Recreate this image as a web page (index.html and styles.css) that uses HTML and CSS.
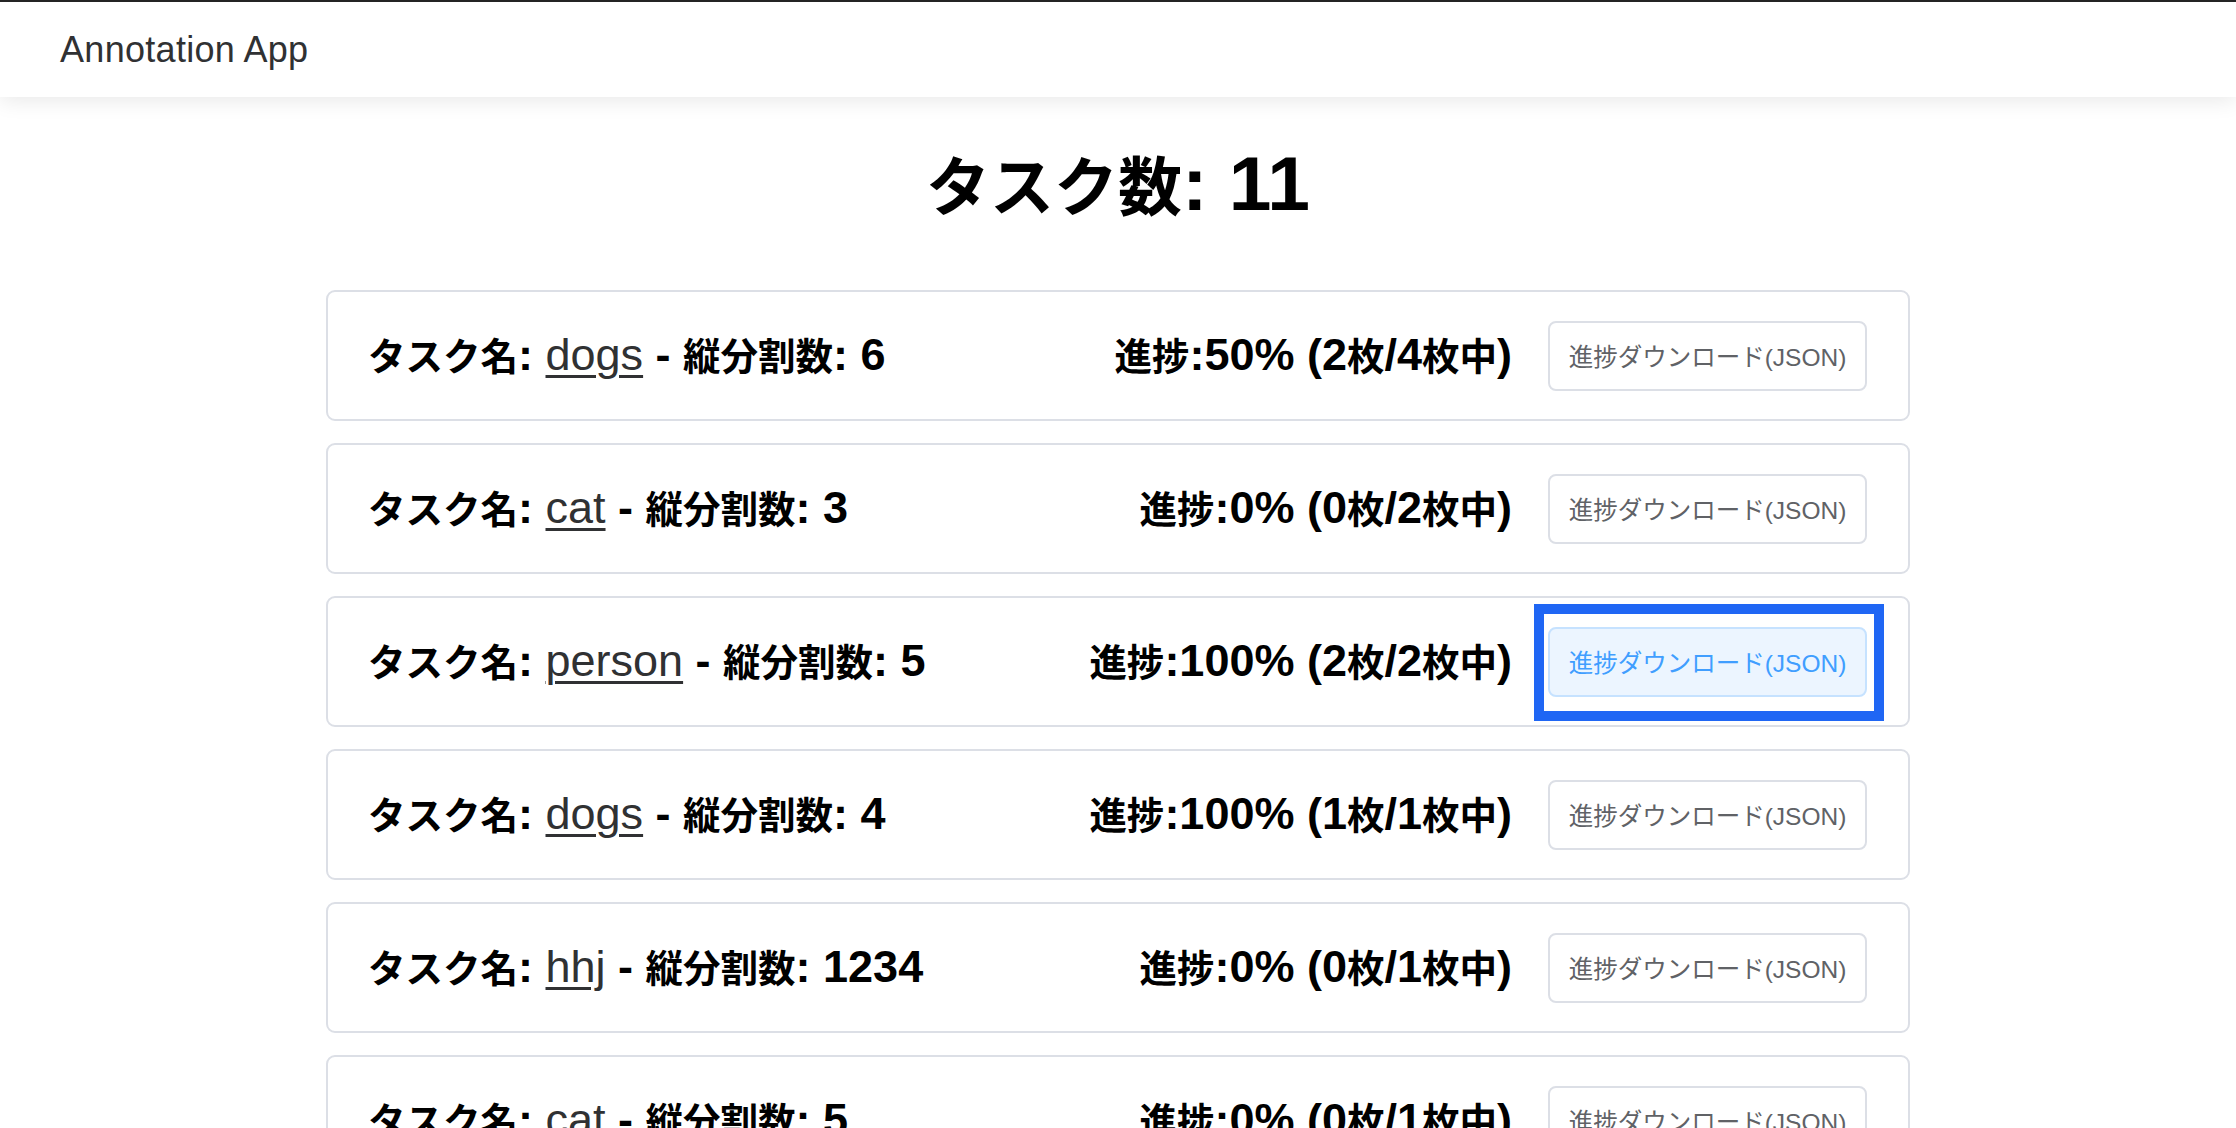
FILE: index.html
```html
<!DOCTYPE html>
<html lang="ja">
<head>
<meta charset="utf-8">
<title>Annotation App</title>
<link rel="stylesheet" href="styles.css">
</head>
<body>
<div class="chrome-line"></div>
<header class="app-header">
  <div class="brand">Annotation App</div>
</header>
<main class="main">
  <h1 class="page-title">タスク数<span class="lt">: 11</span></h1>
  <div class="task-list">
    <div class="task-card">
      <div class="task-name">タスク名<span class="lt">: </span><a class="task-link lt" href="#">dogs</a><span class="lt"> - </span>縦分割数<span class="lt">: 6</span></div>
      <div class="task-right">
        <div class="task-progress">進捗<span class="lt">:50% (2</span>枚<span class="lt">/4</span>枚中<span class="lt">)</span></div>
        <div class="btn-wrap"><button class="dl-btn">進捗ダウンロード(JSON)</button></div>
      </div>
    </div>
    <div class="task-card">
      <div class="task-name">タスク名<span class="lt">: </span><a class="task-link lt" href="#">cat</a><span class="lt"> - </span>縦分割数<span class="lt">: 3</span></div>
      <div class="task-right">
        <div class="task-progress">進捗<span class="lt">:0% (0</span>枚<span class="lt">/2</span>枚中<span class="lt">)</span></div>
        <div class="btn-wrap"><button class="dl-btn">進捗ダウンロード(JSON)</button></div>
      </div>
    </div>
    <div class="task-card">
      <div class="task-name">タスク名<span class="lt">: </span><a class="task-link lt" href="#">person</a><span class="lt"> - </span>縦分割数<span class="lt">: 5</span></div>
      <div class="task-right">
        <div class="task-progress">進捗<span class="lt">:100% (2</span>枚<span class="lt">/2</span>枚中<span class="lt">)</span></div>
        <div class="btn-wrap highlighted"><button class="dl-btn is-focus">進捗ダウンロード(JSON)</button></div>
      </div>
    </div>
    <div class="task-card">
      <div class="task-name">タスク名<span class="lt">: </span><a class="task-link lt" href="#">dogs</a><span class="lt"> - </span>縦分割数<span class="lt">: 4</span></div>
      <div class="task-right">
        <div class="task-progress">進捗<span class="lt">:100% (1</span>枚<span class="lt">/1</span>枚中<span class="lt">)</span></div>
        <div class="btn-wrap"><button class="dl-btn">進捗ダウンロード(JSON)</button></div>
      </div>
    </div>
    <div class="task-card">
      <div class="task-name">タスク名<span class="lt">: </span><a class="task-link lt" href="#">hhj</a><span class="lt"> - </span>縦分割数<span class="lt">: 1234</span></div>
      <div class="task-right">
        <div class="task-progress">進捗<span class="lt">:0% (0</span>枚<span class="lt">/1</span>枚中<span class="lt">)</span></div>
        <div class="btn-wrap"><button class="dl-btn">進捗ダウンロード(JSON)</button></div>
      </div>
    </div>
    <div class="task-card">
      <div class="task-name">タスク名<span class="lt">: </span><a class="task-link lt" href="#">cat</a><span class="lt"> - </span>縦分割数<span class="lt">: 5</span></div>
      <div class="task-right">
        <div class="task-progress">進捗<span class="lt">:0% (0</span>枚<span class="lt">/1</span>枚中<span class="lt">)</span></div>
        <div class="btn-wrap"><button class="dl-btn">進捗ダウンロード(JSON)</button></div>
      </div>
    </div>
  </div>
</main>
</body>
</html>
```

FILE: styles.css
```css
* { box-sizing: border-box; }

html, body {
  margin: 0;
  padding: 0;
  background: #ffffff;
}

body {
  font-family: "Liberation Sans", "Noto Sans CJK JP", sans-serif;
  color: #000000;
}

.chrome-line {
  height: 2px;
  background: #262626;
}

.app-header {
  height: 95px;
  display: flex;
  align-items: center;
  padding-left: 60px;
  background: #ffffff;
  box-shadow: 0 4px 20px rgba(0, 0, 0, 0.09);
  position: relative;
  z-index: 1;
}

.brand {
  font-size: 36px;
  color: #303133;
  letter-spacing: 0.3px;
}

.main {
  width: 1584px;
  margin: 0 auto;
}

.page-title {
  margin: 48px 0 63px;
  font-size: 64px;
  line-height: 77px;
  font-weight: 700;
  text-align: center;
}

.lt {
  font-size: 1.2em;
}

.task-list {
  display: flex;
  flex-direction: column;
  gap: 22px;
}

.task-card {
  height: 131px;
  border: 2px solid #dcdfe6;
  border-radius: 9px;
  padding: 0 41px 0 40px;
  display: flex;
  align-items: center;
  justify-content: space-between;
  background: #ffffff;
}

.task-name,
.task-progress {
  font-size: 37.5px;
  line-height: 46px;
  font-weight: 700;
  white-space: nowrap;
}

.task-link {
  color: #303133;
  text-decoration: underline;
  text-decoration-thickness: 3px;
  text-underline-offset: 5px;
  font-weight: 500;
}

.task-right {
  display: flex;
  align-items: center;
  gap: 36px;
}

.btn-wrap {
  position: relative;
}

.btn-wrap.highlighted::after {
  content: "";
  position: absolute;
  left: -14px;
  right: -17px;
  top: -23px;
  bottom: -24px;
  border: 10px solid #1f66f4;
  pointer-events: none;
}

.dl-btn {
  width: 319px;
  height: 70px;
  border: 2px solid #dcdfe6;
  border-radius: 8px;
  background: #ffffff;
  color: #606266;
  font-family: "Liberation Sans", "Noto Sans CJK JP", sans-serif;
  font-size: 24.5px;
  padding: 0;
  cursor: pointer;
  white-space: nowrap;
}

.dl-btn.is-focus {
  background: #ecf5ff;
  border-color: #c6e2ff;
  color: #409eff;
}
```
